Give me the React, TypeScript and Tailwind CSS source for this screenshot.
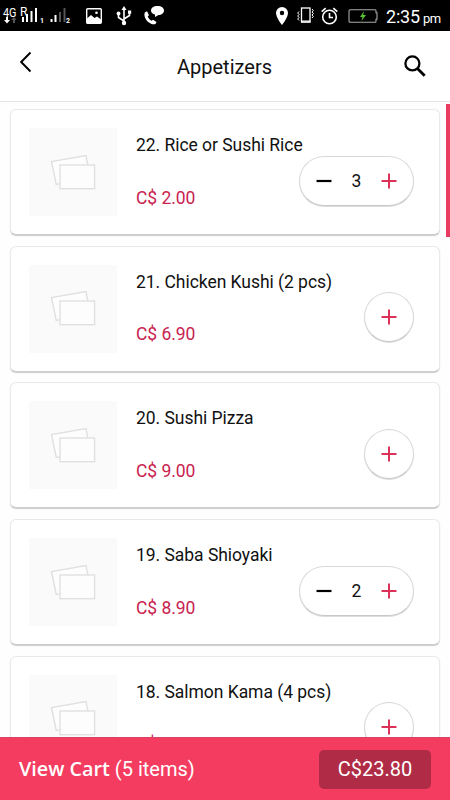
import { useState } from "react"

type MenuItem = {
  id: number
  title: string
  price: number
  quantity: number
}

const ITEMS: MenuItem[] = [
  { id: 22, title: "Rice or Sushi Rice", price: 2, quantity: 3 },
  { id: 21, title: "Chicken Kushi (2 pcs)", price: 6.9, quantity: 0 },
  { id: 20, title: "Sushi Pizza", price: 9, quantity: 0 },
  { id: 19, title: "Saba Shioyaki", price: 8.9, quantity: 2 },
  { id: 18, title: "Salmon Kama (4 pcs)", price: 8.9, quantity: 0 },
]

function StatusBar() {
  return (
    <div className="flex h-[31px] shrink-0 items-center bg-black text-white">
      <svg width="72" height="31" viewBox="0 0 72 31" fill="white" className="shrink-0 font-['Roboto',sans-serif]">
        <text x="3" y="16.500" fontSize="12" textLength="13.500" lengthAdjust="spacingAndGlyphs">4G</text>
        <path d="M6 17h2v3h2l-3 3.500L4 20h2z" />
        <path d="M13 23h2v-3h1.500L14 17l-3 3h2z" fill="#555" />
        <text x="20" y="15.500" fontSize="12">R</text>
        <path d="M22 17h2v5h-2zM26 14h2v8h-2zM30.500 11h2v11h-2zM35 8h2v14h-2z" />
        <text x="40" y="23" fontSize="7" fontWeight="700">1</text>
        <path d="M50.500 19h2v3h-2zM54.500 15h2v7h-2z" />
        <path d="M59 12h2v10h-2zM63.500 8h2v14h-2z" fill="#555" />
        <text x="66" y="23" fontSize="7" fontWeight="700">2</text>
      </svg>
      <svg width="16" height="16" viewBox="0 0 16 16" className="ml-[14px] shrink-0" fill="none" stroke="white">
        <rect x="0.700" y="0.700" width="14.600" height="14.600" rx="1" strokeWidth="1.400" />
        <path d="M1 10.500l4-3.500 3.500 3 2.500-1.500 4 3V15H1z" fill="white" stroke="none" />
        <circle cx="10.500" cy="4.800" r="1.300" fill="white" stroke="none" />
      </svg>
      <svg width="16" height="20" viewBox="0 0 16 20" className="ml-[14px] shrink-0" fill="none" stroke="white" strokeWidth="1.600">
        <path d="M8 17V3M8 15L2.500 11.500V8M8 13l5.500-3.500V6" />
        <path d="M8 0l2.500 4h-5zM12 4.500h3.200v3.200H12z" fill="white" stroke="none" />
        <circle cx="2.500" cy="7.500" r="1.900" fill="white" stroke="none" />
        <circle cx="8" cy="17" r="2.200" fill="white" stroke="none" />
      </svg>
      <svg width="21" height="19" viewBox="0 0 21 19" className="ml-3 shrink-0" fill="white">
        <path d="M13.500 0C17.500 0 20 2 20 4.500S17.500 9 14.500 9L11 11v-2.500C8.500 8 7 6.500 7 4.500 7 2 9.500 0 13.500 0z" />
        <path d="M.8 6.500L3 5.300l2 4-1.300 1.200c.8 2 2 3.300 3.800 4.200l1.500-1L12.500 16l-1 2C7 20-1.500 13 .8 6.500z" />
      </svg>
      <svg width="12" height="18" viewBox="0 0 12 18" className="ml-[111px] shrink-0" fill="white">
        <path d="M6 0a6 6 0 0 0-6 6c0 4.500 6 12 6 12s6-7.500 6-12a6 6 0 0 0-6-6zm0 8.200A2.200 2.200 0 1 1 6 3.800a2.200 2.200 0 0 1 0 4.400z" />
      </svg>
      <svg width="17" height="17" viewBox="0 0 17 17" className="ml-[9px] shrink-0" fill="none" stroke="white">
        <rect x="4.500" y="1" width="8.500" height="14" strokeWidth="1.300" />
        <path d="M4 14h9.500M4 15h9.500" />
        <path d="M2 4.500L.7 6 2 7.500.7 9 2 10.500.7 12 2 13.500M15 2l1.300 1.500L15 5l1.300 1.500L15 8l1.300 1.500L15 11" />
      </svg>
      <svg width="17" height="18" viewBox="0 0 17 18" className="ml-[7px] shrink-0" fill="none" stroke="white" strokeWidth="1.600">
        <circle cx="8.500" cy="10" r="6.800" />
        <path d="M8.500 6v4.500H12M.7 4.700l4-3.500M16.300 4.700l-4-3.500" />
      </svg>
      <svg width="30" height="14" viewBox="0 0 30 14" className="ml-[10px] shrink-0" fill="none">
        <path d="M2 .7h25q1 0 1 1v2h1v6.600h-1v2q0 1-1 1H2q-1 0-1-1V1.700q0-1 1-1z" stroke="#aaa" strokeWidth="1.100" />
        <path d="M16 2l-4 6h2.500L13.500 12l4.500-6h-2.800z" fill="#57c22d" />
      </svg>
      <div className="ml-[8px] flex items-baseline gap-[3px] whitespace-nowrap pt-[3px] font-['Roboto',sans-serif] leading-none">
        <span className="text-[18px] tracking-[-0.2px]">2:35</span>
        <span className="text-[13px] tracking-[-0.5px]">pm</span>
      </div>
    </div>
  )
}

function Header() {
  return (
    <header className="flex h-[71px] shrink-0 items-center justify-between border-b border-[#e5e5e5] bg-white pr-6 pl-5">
      <button className="mb-2" aria-label="Back">
        <svg width="12" height="22" viewBox="0 0 12 22" fill="none" stroke="black" strokeWidth="1.900">
          <path d="M10.500 1.500L1.200 11l9.300 9.500" />
        </svg>
      </button>
      <h1 className="ml-[13px] pt-px text-[20px] leading-6">Appetizers</h1>
      <button aria-label="Search">
        <svg width="22" height="22" viewBox="0 0 22 22" fill="none" stroke="black" strokeWidth="2.300">
          <circle cx="8.400" cy="8.400" r="7" />
          <path d="M13.400 13.400l7.300 7.300" strokeWidth="2.800" />
        </svg>
      </button>
    </header>
  )
}

function Thumbnail() {
  return (
    <div className="flex size-[88px] shrink-0 items-center justify-center bg-[#fafafa] pb-px">
      <svg width="46" height="36" viewBox="0 0 46 36" fill="#fdfdfd" stroke="#e0e0e0" strokeWidth="1.400">
        <path d="M6.300 30.500L1.500 7.500 36 1.500 40 24z" />
        <rect x="10" y="11" width="34.600" height="23.700" />
      </svg>
    </div>
  )
}

function Stepper({ quantity, onChange }: { quantity: number; onChange: (quantity: number) => void }) {
  return (
    <div className="flex h-[50px] shrink-0 items-center rounded-full border border-[#d8d8d8] border-b-[#c8c8c8] bg-white px-[16px] shadow-[0_1px_0_#ddd]">
      {quantity > 0 && (
        <>
          <button aria-label="Remove one" onClick={() => onChange(quantity - 1)}>
            <svg width="16" height="16" viewBox="0 0 16 16" stroke="black" strokeWidth="2.200">
              <path d="M.5 8h15" />
            </svg>
          </button>
          <span className="w-[49px] pt-px text-center text-[17.500px] leading-5">{quantity}</span>
        </>
      )}
      <button aria-label="Add one" onClick={() => onChange(quantity + 1)}>
        <svg width="16" height="16" viewBox="0 0 16 16" stroke="#dc3158" strokeWidth="2">
          <path d="M.5 8h15M8 .5v15" />
        </svg>
      </button>
    </div>
  )
}

export default function App() {
  const [items, setItems] = useState(ITEMS)
  const count = items.reduce((sum, item) => sum + item.quantity, 0)
  const total = items.reduce((sum, item) => sum + item.quantity * item.price, 0)

  const setQuantity = (id: number, quantity: number) =>
    setItems((prev) => prev.map((item) => (item.id === id ? { ...item, quantity } : item)))

  return (
    <div className="flex h-[800px] w-[450px] flex-col overflow-hidden bg-white font-['Roboto',sans-serif] text-[#111]">
      <StatusBar />
      <Header />

      <main className="flex min-h-0 flex-1 justify-between overflow-hidden bg-[#fefefe]">
        <ul className="ml-[10px] w-[430px] space-y-[10.700px] pt-[7px]">
          {items.map((item) => (
            <li
              key={item.id}
              className="flex h-[126px] items-center rounded-[6px] border border-[#e9e9e9] border-b-[#ccc] bg-white pr-[25px] pl-[18px] shadow-[0_1px_1px_#ccc]"
            >
              <Thumbnail />
              <div className="ml-[19px] h-[88px] w-0 flex-1 whitespace-nowrap text-[17.500px] leading-5 tracking-[-0.04px]">
                <p className="pt-[7px]">
                  {item.id}. {item.title}
                </p>
                <p className="pt-[32.500px] text-[#c92250]">C$ {item.price.toFixed(2)}</p>
              </div>
              <div className="pt-[17px]">
                <Stepper quantity={item.quantity} onChange={(quantity) => setQuantity(item.id, quantity)} />
              </div>
            </li>
          ))}
        </ul>
        <div className="mt-[2px] h-[133px] w-1 shrink-0 bg-[#e83d60]" />
      </main>

      <footer className="flex h-[63px] shrink-0 items-center justify-between border-t border-[#d84562] bg-[#f33c60] pr-[19px] pl-[19px] text-[20px] text-white">
        <p className="leading-6">
          <span className="font-['Open_Sans',sans-serif] text-[19.800px] font-semibold">View Cart</span> ({count} items)
        </p>
        <div className="flex h-[39px] w-[112px] items-center justify-center rounded-[5px] bg-[#b02c46]">
          C${total.toFixed(2)}
        </div>
      </footer>
    </div>
  )
}
